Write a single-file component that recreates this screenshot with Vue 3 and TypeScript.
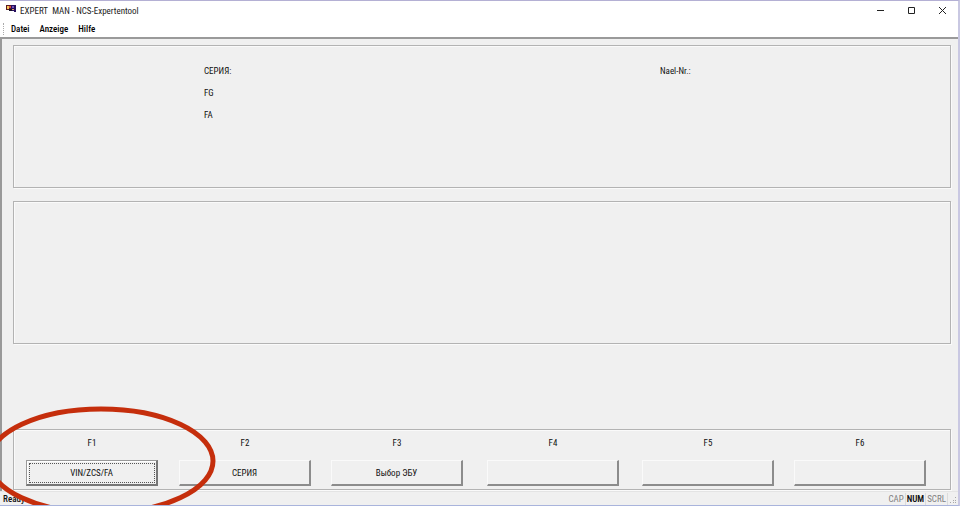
<script setup lang="ts">
import { ref } from 'vue'

interface FunctionKey {
  key: string
  label: string
}

const menus: string[] = ['Datei', 'Anzeige', 'Hilfe']

const functionKeys: FunctionKey[] = [
  { key: 'F1', label: 'VIN/ZCS/FA' },
  { key: 'F2', label: 'СЕРИЯ' },
  { key: 'F3', label: 'Выбор ЭБУ' },
  { key: 'F4', label: '' },
  { key: 'F5', label: '' },
  { key: 'F6', label: '' },
]

const selected = ref('F1')
</script>

<template>
  <div class="window">
    <header class="titlebar">
      <svg class="app-icon" width="11" height="9" viewBox="0 0 11 9" aria-hidden="true">
        <path d="M0 1h5v5H0z" fill="#5c1a20" />
        <path d="M1 2h2v3H1z" fill="#f3c65c" />
        <path d="M3 2h2v2H3z" fill="#d9483c" />
        <path d="M5 1h5v6H5z" fill="#27105e" />
        <path d="M6 2h2v2H6z" fill="#7654b8" />
        <path d="M3 5h3v2H3z" fill="#171128" />
        <path d="M6 5h2v1H6z" fill="#e7a06b" />
        <path d="M8 6h2v2H8z" fill="#27105e" />
      </svg>
      <h1 class="title">EXPERT&nbsp; MAN - NCS-Expertentool</h1>
      <div class="controls">
        <button type="button" class="control" aria-label="Minimize">
          <svg width="9" height="9" viewBox="0 0 9 9"><path d="M1 4.5h7" /></svg>
        </button>
        <button type="button" class="control" aria-label="Maximize">
          <svg width="9" height="9" viewBox="0 0 9 9"><path d="M1.5 1.5h6v6h-6z" /></svg>
        </button>
        <button type="button" class="control" aria-label="Close">
          <svg width="9" height="9" viewBox="0 0 9 9"><path d="M1 1l7 7M8 1l-7 7" /></svg>
        </button>
      </div>
    </header>

    <nav class="menubar">
      <button v-for="menu in menus" :key="menu" type="button" class="menu">{{ menu }}</button>
    </nav>

    <main class="client">
      <section class="panel vehicle">
        <dl class="fields">
          <dt>СЕРИЯ:</dt>
          <dt>FG</dt>
          <dt>FA</dt>
        </dl>
        <dl class="fields">
          <dt>Nael-Nr.:</dt>
        </dl>
      </section>

      <section class="panel"></section>

      <section class="panel keys">
        <div v-for="item in functionKeys" :key="item.key" class="key">
          <label :for="item.key">{{ item.key }}</label>
          <button
            :id="item.key"
            type="button"
            class="push"
            :class="{ focused: selected === item.key }"
            @click="selected = item.key"
          >{{ item.label }}</button>
        </div>
      </section>
    </main>

    <footer class="status">
      <span class="ready">Ready</span>
      <span class="lock">CAP</span>
      <span class="lock on">NUM</span>
      <span class="lock">SCRL</span>
      <svg class="grip" width="8" height="8" viewBox="0 0 8 8" aria-hidden="true">
        <path d="M5 0h1v1H5zM3 3h1v1H3zM5 3h1v1H5zM0 5h1v1H0zM3 5h1v1H3zM5 5h1v1H5z" fill="#a8a8a8" />
      </svg>
    </footer>

    <svg class="marker" width="220" height="112" viewBox="0 0 220 112" aria-hidden="true">
      <ellipse cx="101" cy="56" rx="112" ry="52" />
    </svg>
  </div>
</template>

<style>
body {
  background: #f0f0f0;
}
</style>

<style scoped>
.window {
  position: relative;
  display: flex;
  flex-direction: column;
  box-sizing: border-box;
  height: 100vh;
  overflow: hidden;
  border-top: 1px solid #b4b0d4;
  border-right: 2px solid #c9c8e2;
  border-bottom: 1px solid #a9b4dc;
  background: #f0f0f0;
  color: #111;
  font: 9px/12px "Roboto Condensed", "Liberation Sans", sans-serif;
}

button {
  padding: 0;
  border: 0;
  background: none;
  color: inherit;
  font: inherit;
}

.titlebar {
  display: flex;
  align-items: center;
  height: 19px;
  padding-left: 6px;
  background: #fff;
}

.app-icon {
  margin-right: 3px;
  margin-bottom: 4px;
}

.title {
  flex: 1;
  margin: 0;
  color: #222;
  font: inherit;
}

.controls {
  display: flex;
}

.control {
  display: flex;
  align-items: center;
  justify-content: center;
  width: 31px;
  height: 19px;
}

.control svg {
  fill: none;
  stroke: #222;
}

.menubar {
  display: flex;
  align-items: center;
  gap: 10px;
  height: 17px;
  padding-left: 3px;
  border-bottom: 2px solid #9a9a9a;
  background: #fff;
}

.menubar::before {
  content: "";
  height: 12px;
  margin-right: -3px;
  border-left: 1px dotted #aaa;
}

.menu {
  color: #000;
  font-weight: 500;
}

.client {
  flex: 1;
  display: flex;
  flex-direction: column;
  padding: 6px 7px 1px 11px;
  border-left: 2px solid #999;
}

.panel {
  box-sizing: border-box;
  height: 143px;
  margin-bottom: 13px;
  border: 1px solid #b3b3b3;
  box-shadow: inset 1px 1px #fafafa, 1px 1px #fafafa;
}

.vehicle {
  display: grid;
  grid-template-columns: 456fr 290fr;
  padding: 19px 0 0 190px;
}

.fields {
  display: flex;
  flex-direction: column;
  gap: 10px;
  margin: 0;
}

.keys {
  display: grid;
  grid-template-columns: 153fr 152fr 156fr 155fr 152fr 156fr;
  height: 61px;
  margin-top: auto;
  margin-bottom: 0;
  padding: 7px 0 0 12px;
}

.key {
  display: flex;
  flex-direction: column;
  gap: 11px;
  width: 132px;
  text-align: center;
}

.push {
  height: 26px;
  border: 1px solid #fafafa;
  border-right: 2px solid #8c8c8c;
  border-bottom: 2px solid #8c8c8c;
}

.push.focused {
  border: 1px solid #999;
  border-right: 2px solid #777;
  border-bottom: 2px solid #777;
  box-shadow: inset 1px 1px #fff;
  outline: 1px dotted #555;
  outline-offset: -4px;
}

.status {
  display: flex;
  align-items: center;
  height: 13px;
  padding-left: 3px;
  border-top: 1px solid #e4e4e4;
}

.ready {
  flex: 1;
  font-weight: 500;
}

.lock {
  padding: 0 1px;
  border-right: 1px solid #dcdcdc;
  color: #808080;
}

.lock.on {
  color: #111;
  font-weight: 600;
}

.grip {
  align-self: flex-end;
  margin-left: 2px;
}

.marker {
  position: absolute;
  bottom: -12px;
  left: 0;
  pointer-events: none;
}

.marker ellipse {
  fill: none;
  stroke: #c52e0c;
  stroke-width: 5;
}
</style>
